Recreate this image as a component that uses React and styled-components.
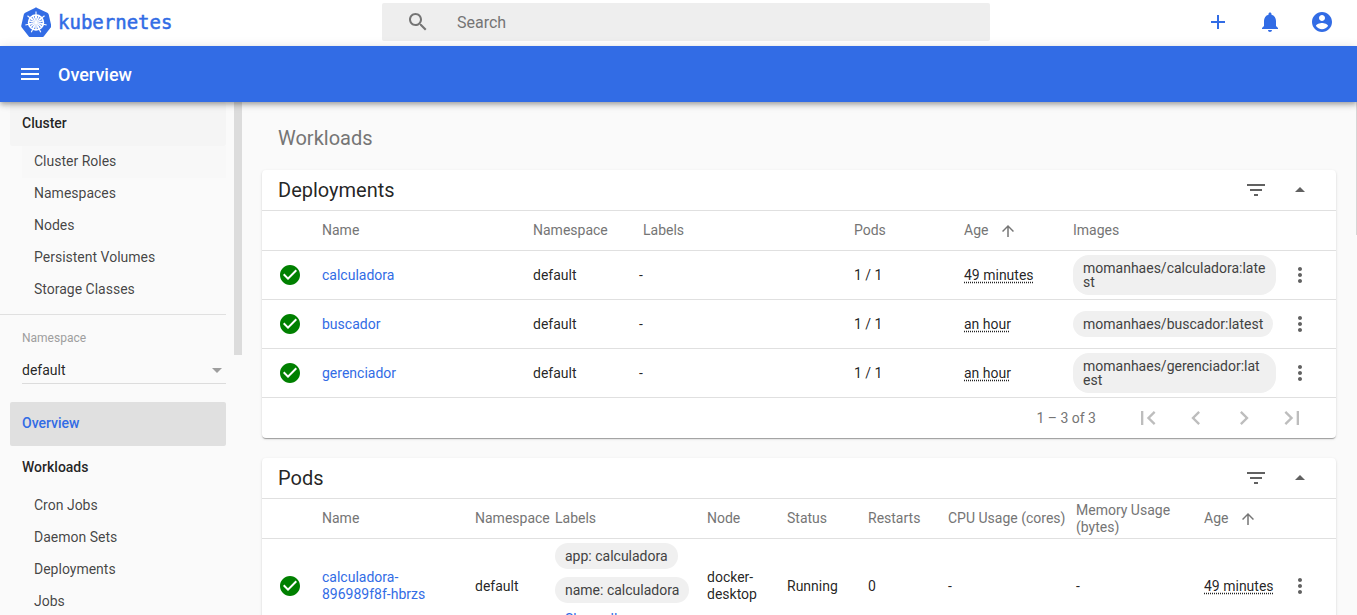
import React from 'react';
import styled, { createGlobalStyle } from 'styled-components';

const Global = createGlobalStyle`
  html, body { margin: 0; padding: 0; height: 100%; overflow: hidden; }
  body { font-family: Roboto, "Liberation Sans", sans-serif; font-size: 14px; color: rgba(0,0,0,.87); background: #fafafa; }
  * { box-sizing: border-box; }
`;

const BLUE = '#326ce5';

const Page = styled.div`
  display: flex; flex-direction: column; width: 1357px; height: 615px; overflow: hidden; position: relative;
`;
const TopBar = styled.header`
  flex: 0 0 46px; display: flex; align-items: center; background: #fff; position: relative; padding-bottom: 2px;
`;
const Brand = styled.div`
  width: 382px; display: flex; align-items: center; gap: 7px; padding-left: 21px;
`;
const BrandName = styled.span`
  font-family: "DejaVu Sans Mono", monospace; font-size: 19px; font-weight: 400; color: ${BLUE};
  line-height: 24px; -webkit-text-stroke: 0.5px ${BLUE};
`;
const SearchBox = styled.div`
  width: 608px; height: 38px; background: #eee; border-radius: 2px; display: flex; align-items: center;
  padding-left: 24px; gap: 27px; color: #757575;
`;
const SearchText = styled.span`
  font-family: Roboto, sans-serif; font-size: 16px; color: #757575;
`;
const TopActions = styled.div`
  margin-left: auto; display: flex; gap: 28px; padding-right: 23px; color: ${BLUE};
`;
const Icon = styled.svg`
  display: block; flex: none; fill: currentColor;
  width: ${p => p.$size || 24}px; height: ${p => p.$size || 24}px;
`;
const BlueBar = styled.div`
  flex: 0 0 56px; background: ${BLUE}; color: #fff; display: flex; align-items: center; padding-left: 18px; gap: 16px;
  box-shadow: 0 2px 4px -1px rgba(0,0,0,.2), 0 4px 5px 0 rgba(0,0,0,.14), 0 1px 10px 0 rgba(0,0,0,.12);
  position: relative; z-index: 2;
`;
const BarTitle = styled.span`
  font-size: 18px; font-weight: 500; line-height: 54px; margin-top: 2px;
`;
const Body = styled.div`
  flex: 1; display: flex; min-height: 0;
`;
const Sidebar = styled.nav`
  flex: 0 0 245px; position: relative; overflow: hidden; padding-right: 19px;
`;
const Thumb = styled.div`
  position: absolute; left: 234px; top: 0; width: 8px; height: 253px; background: #dcdcdc;
`;
const Section = styled.div`
  margin-left: 10px; height: 44px; padding: 0 0 2px 12px; display: flex; align-items: center; border-radius: 2px;
  font-weight: 500; color: ${p => p.$active ? BLUE : 'rgba(0,0,0,.87)'};
  background: ${p => p.$active ? '#e0e0e0' : p.$hover ? '#f5f5f5' : 'transparent'};
`;
const SubItem = styled.div`
  margin-left: 22px; height: 32px; padding: 0 0 2px 12px; display: flex; align-items: center;
  color: rgba(0,0,0,.74); background: ${p => p.$hover ? '#f8f8f8' : 'transparent'};
`;
const Divider = styled.div`
  height: 1px; background: #e0e0e0; margin-top: 8px;
`;
const NsBlock = styled.div`
  margin: 0 0 18px 22px; padding-top: 16px;
`;
const NsLabel = styled.div`
  font-size: 12px; line-height: 14px; color: #9e9e9e;
`;
const NsSelect = styled.div`
  margin-top: 17px; padding-bottom: 4px; line-height: 17px; border-bottom: 1px solid #dcdcdc;
  display: flex; align-items: center; justify-content: space-between;
`;
const NsArrow = styled.span`
  width: 0; height: 0; margin-right: 4px; border-left: 5px solid transparent; border-right: 5px solid transparent;
  border-top: 5px solid #9e9e9e;
`;
const Main = styled.main`
  flex: 1; min-width: 0; overflow: hidden; padding: 20px 21px 0 17px; position: relative;
`;
const PageScroll = styled.div`
  position: absolute; right: 0; top: 0; width: 1px; height: 133px; background: #d6d6d6;
`;
const Heading = styled.h2`
  margin: 0 0 16px 16px; font-size: 20px; font-weight: 400; line-height: 32px; color: #757575;
`;
const Card = styled.section`
  background: #fff; border-radius: 4px; margin-bottom: 20px;
  box-shadow: 0 2px 1px -1px rgba(0,0,0,.2), 0 1px 1px 0 rgba(0,0,0,.14), 0 1px 3px 0 rgba(0,0,0,.12);
`;
const CardHead = styled.div`
  height: 41px; display: flex; align-items: center; padding: 0 24px 1px 16px; border-bottom: 1px solid #e0e0e0;
`;
const CardTitle = styled.h3`
  margin: 0; font-size: 20px; font-weight: 400; line-height: 40px; color: rgba(0,0,0,.87);
`;
const CardTools = styled.div`
  margin-left: auto; display: flex; gap: 20px; color: #616161;
`;
const Row = styled.div`
  display: grid; grid-template-columns: ${p => p.$cols}; align-items: center;
  height: ${p => p.$h}px; border-bottom: 1px solid #e0e0e0;
`;
const HeadRow = styled(Row)`
  color: #757575; line-height: 17px;
`;
const Cell = styled.div`
  min-width: 0; line-height: 17px; padding-right: ${p => p.$pr || 0}px;
`;
const StatusCell = styled.div`
  padding-left: 16px; color: green;
`;
const StatusIcon = styled.svg`
  display: block; width: 24px; height: 24px;
`;
const SortHead = styled.div`
  display: flex; align-items: center; gap: 11px;
`;
const Link = styled.span`
  color: ${BLUE};
`;
const DashShift = styled.span`
  margin-left: -4px;
`;
const Age = styled.span`
  text-decoration: underline dotted; text-underline-offset: 2px;
`;
const ChipStack = styled.div`
  display: flex; flex-direction: column; align-items: flex-start; gap: 8px; align-self: start; padding-top: 4px;
`;
const Chip = styled.span`
  display: inline-block; max-width: 203px; background: #f0f0f0; border-radius: 16px; padding: 6px 10px;
  line-height: 14px; word-break: break-all; color: #424242;
`;
const ShowAll = styled.span`
  color: ${BLUE}; padding-left: 10px; line-height: 17px;
`;
const MoreBtn = styled.div`
  display: flex; justify-content: flex-start; color: #616161;
`;
const Pager = styled.div`
  height: 40px; display: flex; align-items: center; padding-right: 30px; color: #757575;
`;
const PagerCount = styled.span`
  margin-left: auto; margin-right: 38px;
`;
const PagerBtns = styled.div`
  display: flex; gap: 20px; color: #bdbdbd;
`;

const P = {
  menu: 'M3 18h18v-2H3v2zm0-5h18v-2H3v2zm0-7v2h18V6H3z',
  search: 'M15.5 14h-.79l-.28-.27C15.41 12.59 16 11.11 16 9.5 16 5.91 13.09 3 9.5 3S3 5.91 3 9.5 5.91 16 9.5 16c1.61 0 3.09-.59 4.23-1.57l.27.28v.79l5 4.99L20.49 19l-4.99-5zm-6 0C7.01 14 5 11.99 5 9.5S7.01 5 9.5 5 14 7.01 14 9.5 11.99 14 9.5 14z',
  add: 'M19 13h-6v6h-2v-6H5v-2h6V5h2v6h6v2z',
  bell: 'M12 22c1.1 0 2-.9 2-2h-4c0 1.1.89 2 2 2zm6-6v-5c0-3.07-1.64-5.64-4.5-6.32V4c0-.83-.67-1.5-1.5-1.5s-1.5.67-1.5 1.5v.68C7.63 5.36 6 7.92 6 11v5l-2 2v1h16v-1l-2-2z',
  account: 'M12 2C6.48 2 2 6.48 2 12s4.48 10 10 10 10-4.48 10-10S17.52 2 12 2zm0 3c1.66 0 3 1.34 3 3s-1.34 3-3 3-3-1.34-3-3 1.34-3 3-3zm0 14.2c-2.5 0-4.71-1.28-6-3.22.03-1.99 4-3.08 6-3.08 1.99 0 5.97 1.09 6 3.08-1.29 1.94-3.5 3.22-6 3.22z',
  filter: 'M10 18h4v-2h-4v2zM3 6v2h18V6H3zm3 7h12v-2H6v2z',
  up: 'M7 14l5-5 5 5z',
  more: 'M12 8c1.1 0 2-.9 2-2s-.9-2-2-2-2 .9-2 2 .9 2 2 2zm0 2c-1.1 0-2 .9-2 2s.9 2 2 2 2-.9 2-2-.9-2-2-2zm0 6c-1.1 0-2 .9-2 2s.9 2 2 2 2-.9 2-2-.9-2-2-2z',
  arrow: 'M4 12l1.41 1.41L11 7.83V20h2V7.83l5.58 5.59L20 12l-8-8-8 8z',
  first: 'M18.41 16.59L13.82 12l4.59-4.59L17 6l-6 6 6 6zM6 6h2v12H6z',
  prev: 'M15.41 7.41L14 6l-6 6 6 6 1.41-1.41L10.83 12z',
  next: 'M10 6L8.59 7.41 13.17 12l-4.58 4.59L10 18l6-6z',
  last: 'M5.59 7.41L10.18 12l-4.59 4.59L7 18l6-6-6-6zM16 6h2v12h-2z',
  check: 'M12 2C6.48 2 2 6.48 2 12s4.48 10 10 10 10-4.48 10-10S17.52 2 12 2zm-2 15l-5-5 1.41-1.41L10 14.17l7.59-7.59L19 8l-9 9z',
};

const I = ({ d, size }) => (
  <Icon $size={size} viewBox="0 0 24 24"><path d={d} /></Icon>
);

const Status = () => (
  <StatusCell>
    <StatusIcon viewBox="0 0 24 24">
      <circle cx="12" cy="12" r="9" fill="#fff" />
      <path d={P.check} fill="#008000" />
    </StatusIcon>
  </StatusCell>
);

const Logo = () => {
  const spokes = [0, 1, 2, 3, 4, 5, 6];
  return (
    <svg width="30" height="30" viewBox="0 0 30 30" style={{ display: 'block', flex: 'none' }}>
      <path
        d="M15 .6c.4 0 .8.1 1.1.3l10.2 4.9c.7.3 1.2.9 1.4 1.7l2.5 11c.2.7 0 1.5-.5 2.1l-7 8.8c-.5.6-1.2.9-1.9.9H9.7c-.7 0-1.4-.3-1.9-.9l-7-8.8c-.5-.6-.7-1.4-.5-2.1l2.5-11c.2-.8.7-1.4 1.4-1.7L13.9.9c.3-.2.7-.3 1.1-.3z"
        fill={BLUE}
      />
      <g stroke="#fff" fill="none">
        <circle cx="15" cy="15.5" r="7.4" strokeWidth="1.7" />
        {spokes.map(i => {
          const a = (i * 360) / 7;
          return (
            <g key={i} transform={`rotate(${a} 15 15.5)`}>
              <line x1="15" y1="13.6" x2="15" y2="4.6" strokeWidth="1.1" />
              <line x1="15" y1="8.2" x2="15" y2="11.6" strokeWidth="2" />
            </g>
          );
        })}
        {spokes.map(i => {
          const a = ((i + 0.5) * 360) / 7;
          return <line key={i} x1="15" y1="14" x2="15" y2="8" strokeWidth="1.6" transform={`rotate(${a} 15 15.5)`} />;
        })}
      </g>
      <circle cx="15" cy="15.5" r="1.8" fill="#fff" />
    </svg>
  );
};

const DEP_COLS = '60px 211px 110px 211px 110px 109px 215px 1fr';
const POD_COLS = '60px 153px 80px 152px 80px 81px 80px 128px 128px 84px 1fr';

const deployments = [
  { name: 'calculadora', age: '49 minutes', image: 'momanhaes/calculadora:latest' },
  { name: 'buscador', age: 'an hour', image: 'momanhaes/buscador:latest' },
  { name: 'gerenciador', age: 'an hour', image: 'momanhaes/gerenciador:latest' },
];

const Tools = () => (
  <CardTools><I d={P.filter} /><I d={P.up} /></CardTools>
);

export default function App() {
  return (
    <Page>
      <Global />
      <TopBar>
        <Brand><Logo /><BrandName>kubernetes</BrandName></Brand>
        <SearchBox><I d={P.search} /><SearchText>Search</SearchText></SearchBox>
        <TopActions><I d={P.add} /><I d={P.bell} /><I d={P.account} /></TopActions>
      </TopBar>
      <BlueBar><I d={P.menu} /><BarTitle>Overview</BarTitle></BlueBar>
      <Body>
        <Sidebar>
          <Thumb />
          <Section $hover>Cluster</Section>
          <SubItem $hover>Cluster Roles</SubItem>
          {['Namespaces', 'Nodes', 'Persistent Volumes', 'Storage Classes'].map(t => <SubItem key={t}>{t}</SubItem>)}
          <Divider />
          <NsBlock>
            <NsLabel>Namespace</NsLabel>
            <NsSelect>default<NsArrow /></NsSelect>
          </NsBlock>
          <Section $active>Overview</Section>
          <Section>Workloads</Section>
          {['Cron Jobs', 'Daemon Sets', 'Deployments', 'Jobs'].map(t => <SubItem key={t}>{t}</SubItem>)}
        </Sidebar>
        <Main>
          <PageScroll />
          <Heading>Workloads</Heading>
          <Card>
            <CardHead><CardTitle>Deployments</CardTitle><Tools /></CardHead>
            <HeadRow $cols={DEP_COLS} $h={40}>
              <span />
              <Cell>Name</Cell><Cell>Namespace</Cell><Cell>Labels</Cell><Cell>Pods</Cell>
              <SortHead>Age<I d={P.arrow} size={18} /></SortHead>
              <Cell>Images</Cell>
            </HeadRow>
            {deployments.map(d => (
              <Row key={d.name} $cols={DEP_COLS} $h={49}>
                <Status />
                <Cell><Link>{d.name}</Link></Cell>
                <Cell>default</Cell>
                <Cell><DashShift>-</DashShift></Cell>
                <Cell>1 / 1</Cell>
                <Cell><Age>{d.age}</Age></Cell>
                <Cell><Chip>{d.image}</Chip></Cell>
                <MoreBtn><I d={P.more} /></MoreBtn>
              </Row>
            ))}
            <Pager>
              <PagerCount>1 – 3 of 3</PagerCount>
              <PagerBtns>
                <I d={P.first} size={28} /><I d={P.prev} size={28} /><I d={P.next} size={28} /><I d={P.last} size={28} />
              </PagerBtns>
            </Pager>
          </Card>
          <Card>
            <CardHead><CardTitle>Pods</CardTitle><Tools /></CardHead>
            <HeadRow $cols={POD_COLS} $h={40}>
              <span />
              <Cell>Name</Cell><Cell>Namespace</Cell><Cell>Labels</Cell><Cell>Node</Cell><Cell>Status</Cell>
              <Cell>Restarts</Cell><Cell>CPU Usage (cores)</Cell><Cell>Memory Usage (bytes)</Cell>
              <SortHead>Age<I d={P.arrow} size={18} /></SortHead>
            </HeadRow>
            <Row $cols={POD_COLS} $h={95}>
              <Status />
              <Cell $pr={16}><Link>calculadora-896989f8f-hbrzs</Link></Cell>
              <Cell>default</Cell>
              <ChipStack>
                <Chip>app: calculadora</Chip>
                <Chip>name: calculadora</Chip>
                <ShowAll>Show all</ShowAll>
              </ChipStack>
              <Cell>docker-desktop</Cell>
              <Cell>Running</Cell>
              <Cell>0</Cell>
              <Cell>-</Cell>
              <Cell>-</Cell>
              <Cell><Age>49 minutes</Age></Cell>
              <MoreBtn><I d={P.more} /></MoreBtn>
            </Row>
          </Card>
        </Main>
      </Body>
    </Page>
  );
}
